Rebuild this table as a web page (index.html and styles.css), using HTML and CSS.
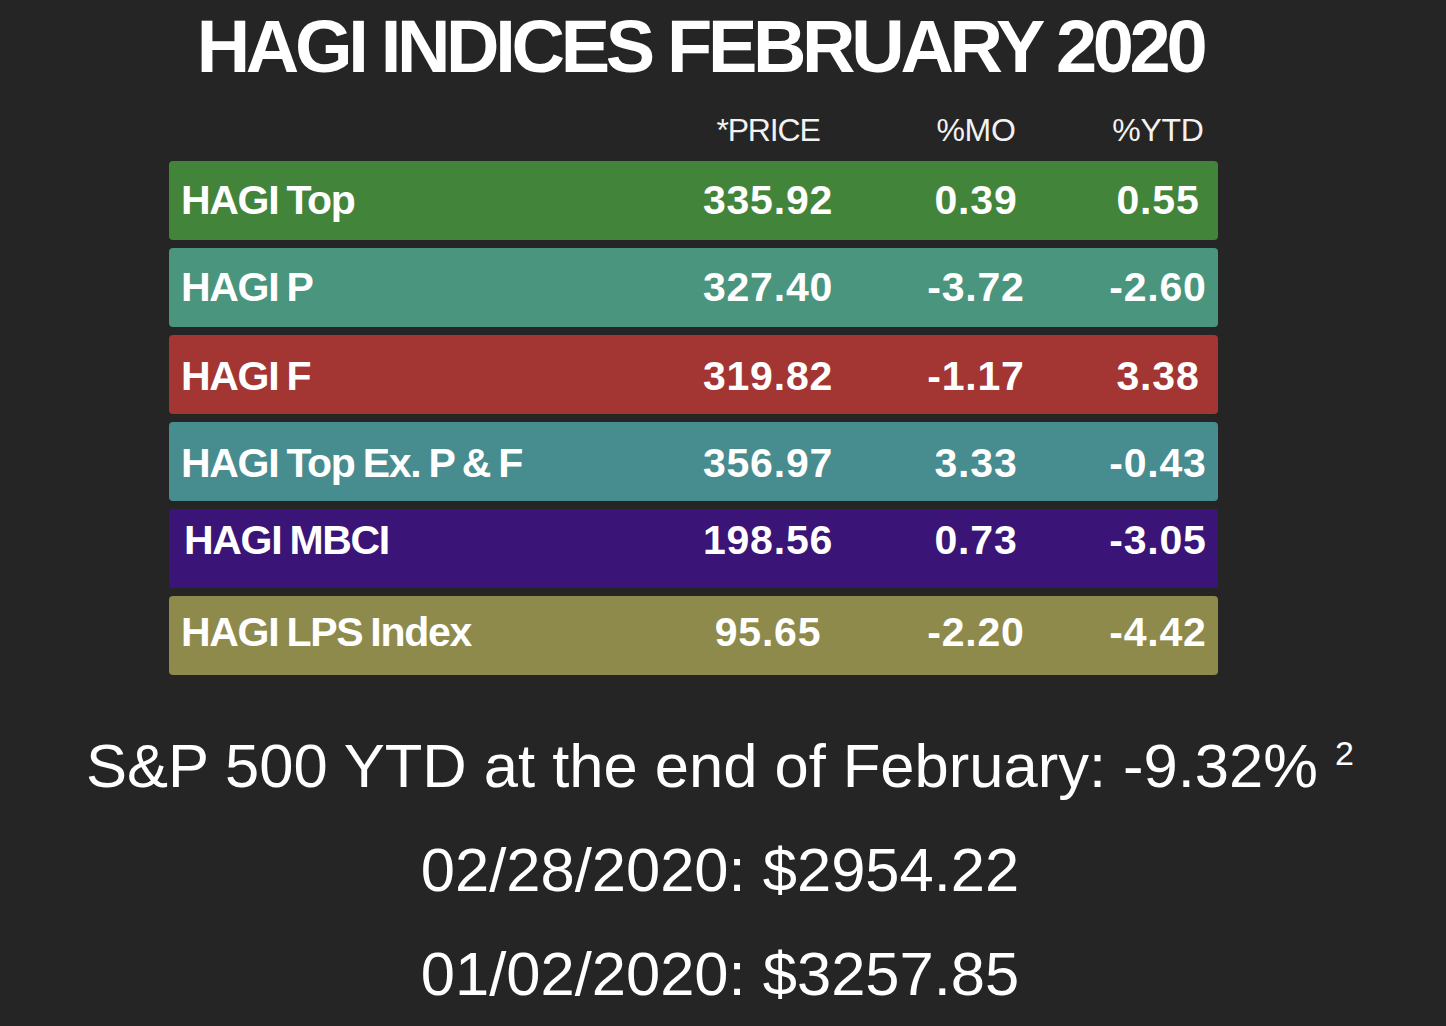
FILE: index.html
```html
<!DOCTYPE html>
<html lang="en">
<head>
<meta charset="utf-8">
<title>HAGI Indices February 2020</title>
<link rel="stylesheet" href="styles.css">
</head>
<body>
<main class="page">
  <h1 class="title">HAGI INDICES FEBRUARY 2020</h1>
  <div class="table">
    <div class="head"><span></span><span class="head-price">*PRICE</span><span>%MO</span><span>%YTD</span></div>
    <div class="row row-green"><span class="name">HAGI Top</span><span class="num">335.92</span><span class="num">0.39</span><span class="num">0.55</span></div>
    <div class="row row-teal"><span class="name">HAGI P</span><span class="num">327.40</span><span class="num">-3.72</span><span class="num">-2.60</span></div>
    <div class="row row-red"><span class="name">HAGI F</span><span class="num">319.82</span><span class="num">-1.17</span><span class="num">3.38</span></div>
    <div class="row row-cyan"><span class="name">HAGI Top Ex. P &amp; F</span><span class="num">356.97</span><span class="num">3.33</span><span class="num">-0.43</span></div>
    <div class="row row-purple"><span class="name">HAGI MBCI</span><span class="num">198.56</span><span class="num">0.73</span><span class="num">-3.05</span></div>
    <div class="row row-olive"><span class="name">HAGI LPS Index</span><span class="num">95.65</span><span class="num">-2.20</span><span class="num">-4.42</span></div>
  </div>
  <div class="summary">
    <p class="line">S&amp;P 500 YTD at the end of February: -9.32% <sup class="note">2</sup></p>
    <p class="line">02/28/2020: $2954.22</p>
    <p class="line">01/02/2020: $3257.85</p>
  </div>
</main>
</body>
</html>
```

FILE: styles.css
```css
html, body {
  margin: 0;
  padding: 0;
  background: #252525;
}

.page {
  width: 1446px;
  height: 1026px;
  overflow: hidden;
  color: #ffffff;
  font-family: "Liberation Sans", Arial, sans-serif;
}

.title {
  margin: 10px 0 0 0;
  padding-right: 46px;
  font-size: 74px;
  line-height: 74px;
  font-weight: 700;
  letter-spacing: -4.3px;
  text-align: center;
}

.table {
  margin: 30px 0 0 169px;
  width: 1049px;
  display: flex;
  flex-direction: column;
  gap: 8px;
}

.head,
.row {
  display: grid;
  grid-template-columns: 513px 172px 244px 120px;
  text-align: center;
}

.head {
  font-size: 32px;
  line-height: 32px;
  letter-spacing: -0.3px;
  color: #f2f2f2;
  margin-bottom: 7px;
}

.head-price {
  letter-spacing: -1.2px;
}

.row {
  box-sizing: border-box;
  height: 79px;
  padding-top: 19px;
  border-radius: 4px;
  font-size: 41px;
  line-height: 41px;
  font-weight: 700;
}

.name {
  text-align: left;
  padding-left: 12px;
  letter-spacing: -1.3px;
  word-spacing: -2px;
}

.num {
  letter-spacing: 0.8px;
}

.row-green { background: #43843b; }
.row-teal { background: #4a957e; }
.row-red { background: #a33533; padding-top: 21px; }
.row-cyan { background: #478c8e; padding-top: 21px; }
.row-purple { background: #3b1477; padding-top: 11px; }
.row-purple .name { padding-left: 15px; }
.row-olive { background: #8e8a4b; padding-top: 16px; }

.summary {
  margin-top: 39px;
  padding-right: 6px;
  text-align: center;
}

.line {
  margin: 0;
  font-size: 61.5px;
  line-height: 104px;
}

.note {
  font-size: 34px;
  line-height: 0;
  vertical-align: 22px;
}
```
